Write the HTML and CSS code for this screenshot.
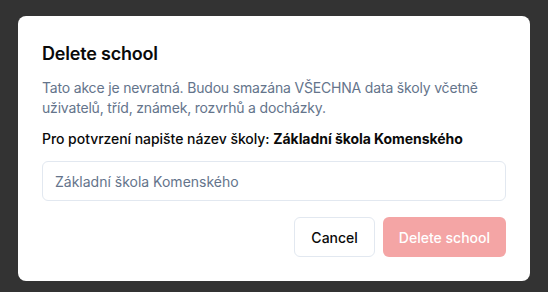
FILE: index.html
```html
<!DOCTYPE html>
<html>
<head>
<meta charset="utf-8">
<link rel="stylesheet" href="styles.css">
</head>
<body>
<div class="overlay">
  <div class="dialog">
    <div class="header">
      <h2 class="title">Delete school</h2>
      <p class="desc">Tato akce je nevratná. Budou smazána VŠECHNA data školy včetně uživatelů, tříd, známek, rozvrhů a docházky.</p>
    </div>
    <div class="body">
      <p class="label">Pro potvrzení napište název školy: <strong>Základní škola Komenského</strong></p>
      <input class="input" type="text" placeholder="Základní škola Komenského">
    </div>
    <div class="footer">
      <button class="btn btn-outline">Cancel</button>
      <button class="btn btn-danger" disabled>Delete school</button>
    </div>
  </div>
</div>
</body>
</html>
```

FILE: styles.css
```css
* { box-sizing: border-box; }
html, body { margin: 0; padding: 0; }
body {
  width: 548px;
  height: 292px;
  background: #333333;
  font-family: Inter, "Noto Sans", sans-serif;
  overflow: hidden;
}
.overlay {
  padding: 16px 18px 11px 18px;
}
.dialog {
  width: 512px;
  height: 265px;
  background: #ffffff;
  border-radius: 8px;
  padding: 24px;
  display: flex;
  flex-direction: column;
}
.header {
  display: flex;
  flex-direction: column;
  gap: 10px;
}
.title {
  margin: 0;
  font-size: 18px;
  line-height: 28px;
  font-weight: 600;
  color: #0a0a0a;
  letter-spacing: -0.2px;
}
.desc {
  margin: 0;
  font-size: 14px;
  line-height: 20px;
  color: #64748b;
  letter-spacing: -0.18px;
}
.body {
  margin-top: 11px;
  display: flex;
  flex-direction: column;
  gap: 12px;
}
.label {
  margin: 0;
  font-size: 14px;
  line-height: 20px;
  font-weight: 500;
  color: #0a0a0a;
  letter-spacing: -0.05px;
}
.label strong { font-weight: 700; }
.input {
  width: 100%;
  height: 40px;
  border: 1px solid #e2e8f0;
  border-radius: 6px;
  padding: 0 12px;
  font-family: inherit;
  font-size: 14px;
  color: #0a0a0a;
  background: #ffffff;
  outline: none;
}
.input::placeholder { color: #64748b; }
.footer {
  margin-top: 16px;
  display: flex;
  justify-content: flex-end;
  gap: 8px;
}
.btn {
  height: 40px;
  padding: 0 16px;
  border-radius: 6px;
  font-family: inherit;
  font-size: 14px;
  font-weight: 500;
  cursor: pointer;
}
.btn-outline {
  background: #ffffff;
  border: 1px solid #e2e8f0;
  color: #0a0a0a;
}
.btn-danger {
  background: #f4a5a5;
  border: none;
  color: #ffffff;
}
```
